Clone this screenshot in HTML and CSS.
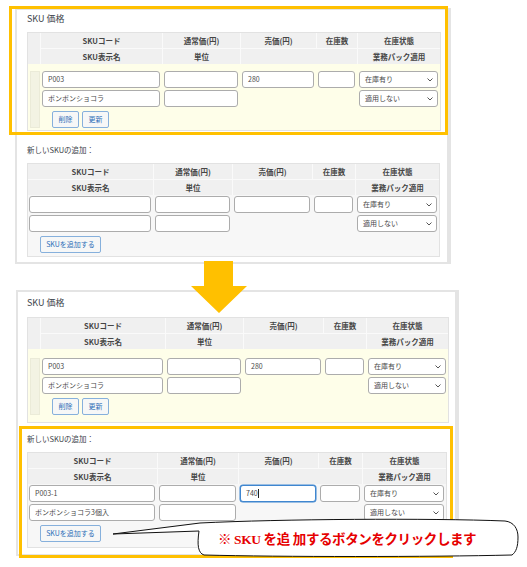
FILE: index.html
```html
<!DOCTYPE html>
<html lang="ja">
<head>
<meta charset="utf-8">
<title>SKU 価格</title>
<link rel="stylesheet" href="styles.css">
</head>
<body>
<div class="page">

  <section class="shot shot-a">
    <div class="box-title">SKU 価格</div>
    <div class="sku-table t-a1">
      <div class="thead">
        <div class="th th-handle"></div>
        <div class="th">SKUコード</div>
        <div class="th">通常価(円)</div>
        <div class="th">売価(円)</div>
        <div class="th">在庫数</div>
        <div class="th">在庫状態</div>
        <div class="th">SKU表示名</div>
        <div class="th">単位</div>
        <div class="th span2"></div>
        <div class="th">業務パック適用</div>
      </div>
      <div class="tbody body-yellow pad-a1">
        <div class="handle"></div>
        <div class="cell"><div class="field">P003</div></div>
        <div class="cell"><div class="field"></div></div>
        <div class="cell"><div class="field">280</div></div>
        <div class="cell"><div class="field"></div></div>
        <div class="cell"><div class="field select"><span>在庫有り</span><svg class="chev" viewBox="0 0 6 4"><polyline points="0.5,0.5 3,3 5.5,0.5"/></svg></div></div>
        <div class="cell"><div class="field">ポンポンショコラ</div></div>
        <div class="cell"><div class="field"></div></div>
        <div class="cell span2"></div>
        <div class="cell"><div class="field select"><span>適用しない</span><svg class="chev" viewBox="0 0 6 4"><polyline points="0.5,0.5 3,3 5.5,0.5"/></svg></div></div>
        <div class="actions">
          <span class="btn">削除</span>
          <span class="btn">更新</span>
        </div>
      </div>
    </div>

    <div class="sub-title">新しいSKUの追加：</div>
    <div class="sku-table t-a2">
      <div class="thead">
        <div class="th">SKUコード</div>
        <div class="th">通常価(円)</div>
        <div class="th">売価(円)</div>
        <div class="th">在庫数</div>
        <div class="th">在庫状態</div>
        <div class="th">SKU表示名</div>
        <div class="th">単位</div>
        <div class="th span2"></div>
        <div class="th">業務パック適用</div>
      </div>
      <div class="tbody body-gray pad-a2">
        <div class="cell"><div class="field"></div></div>
        <div class="cell"><div class="field"></div></div>
        <div class="cell"><div class="field"></div></div>
        <div class="cell"><div class="field"></div></div>
        <div class="cell"><div class="field select"><span>在庫有り</span><svg class="chev" viewBox="0 0 6 4"><polyline points="0.5,0.5 3,3 5.5,0.5"/></svg></div></div>
        <div class="cell"><div class="field"></div></div>
        <div class="cell"><div class="field"></div></div>
        <div class="cell span2"></div>
        <div class="cell"><div class="field select"><span>適用しない</span><svg class="chev" viewBox="0 0 6 4"><polyline points="0.5,0.5 3,3 5.5,0.5"/></svg></div></div>
        <div class="actions actions-full">
          <span class="btn btn-add">SKUを追加する</span>
        </div>
      </div>
    </div>
  </section>

  <section class="shot shot-b">
    <div class="box-title title-b">SKU 価格</div>
    <div class="sku-table t-b1">
      <div class="thead">
        <div class="th th-handle"></div>
        <div class="th">SKUコード</div>
        <div class="th">通常価(円)</div>
        <div class="th">売価(円)</div>
        <div class="th">在庫数</div>
        <div class="th">在庫状態</div>
        <div class="th">SKU表示名</div>
        <div class="th">単位</div>
        <div class="th span2"></div>
        <div class="th">業務パック適用</div>
      </div>
      <div class="tbody body-yellow pad-b1">
        <div class="handle"></div>
        <div class="cell"><div class="field">P003</div></div>
        <div class="cell"><div class="field"></div></div>
        <div class="cell"><div class="field">280</div></div>
        <div class="cell"><div class="field"></div></div>
        <div class="cell"><div class="field select"><span>在庫有り</span><svg class="chev" viewBox="0 0 6 4"><polyline points="0.5,0.5 3,3 5.5,0.5"/></svg></div></div>
        <div class="cell"><div class="field">ポンポンショコラ</div></div>
        <div class="cell"><div class="field"></div></div>
        <div class="cell span2"></div>
        <div class="cell"><div class="field select"><span>適用しない</span><svg class="chev" viewBox="0 0 6 4"><polyline points="0.5,0.5 3,3 5.5,0.5"/></svg></div></div>
        <div class="actions">
          <span class="btn">削除</span>
          <span class="btn">更新</span>
        </div>
      </div>
    </div>

    <div class="sub-title title-b2">新しいSKUの追加：</div>
    <div class="sku-table t-b2">
      <div class="thead">
        <div class="th">SKUコード</div>
        <div class="th">通常価(円)</div>
        <div class="th">売価(円)</div>
        <div class="th">在庫数</div>
        <div class="th">在庫状態</div>
        <div class="th">SKU表示名</div>
        <div class="th">単位</div>
        <div class="th span2"></div>
        <div class="th">業務パック適用</div>
      </div>
      <div class="tbody body-gray pad-b2">
        <div class="cell"><div class="field">P003-1</div></div>
        <div class="cell"><div class="field"></div></div>
        <div class="cell"><div class="field focus">740<span class="caret"></span></div></div>
        <div class="cell"><div class="field"></div></div>
        <div class="cell"><div class="field select"><span>在庫有り</span><svg class="chev" viewBox="0 0 6 4"><polyline points="0.5,0.5 3,3 5.5,0.5"/></svg></div></div>
        <div class="cell"><div class="field">ポンポンショコラ3個入</div></div>
        <div class="cell"><div class="field"></div></div>
        <div class="cell span2"></div>
        <div class="cell"><div class="field select"><span>適用しない</span><svg class="chev" viewBox="0 0 6 4"><polyline points="0.5,0.5 3,3 5.5,0.5"/></svg></div></div>
        <div class="actions actions-full">
          <span class="btn btn-add">SKUを追加する</span>
        </div>
      </div>
    </div>
  </section>

  <div class="highlight hl-a"></div>
  <div class="highlight hl-b"></div>

  <svg class="arrow" viewBox="0 0 60 54" width="60" height="54">
    <polygon points="15,0 44,0 44,25 58,25 30,52 2,25 15,25" fill="#ffc000"/>
  </svg>

  <div class="callout">
    <svg class="callout-shape" viewBox="0 0 425 45" width="425" height="45">
      <path d="M13,19 L100,8 C180,4 330,3 405,6 C414,7 418,14 418,22 C418,32 416,37 412,40 C330,42 180,42 104,40 C98,38 97,30 99,16 Z" fill="#fff" stroke="#111" stroke-width="1"/>
    </svg>
    <p class="callout-text">※ SKU を追 加するボタンをクリックします</p>
  </div>

</div>
</body>
</html>
```

FILE: styles.css
```css
* { box-sizing: border-box; }

html, body {
  margin: 0;
  padding: 0;
  background: #ffffff;
}

body {
  font-family: "Noto Sans CJK JP", "Noto Sans", sans-serif;
  color: #3c434a;
}

.page {
  position: relative;
  width: 527px;
  height: 567px;
  overflow: hidden;
}

/* screenshot frames */
.shot {
  background: #ffffff;
  border: 2px solid #e4e4e4;
  border-right-width: 4px;
}

.shot-a {
  margin: 8px 0 0 15px;
  width: 436px;
  padding: 2px 0 5px 10px;
}

.shot-b {
  margin: 26px 0 0 16px;
  width: 443px;
  padding: 4px 0 6px 9px;
}

.box-title {
  height: 14px;
  line-height: 14px;
  font-size: 9px;
  color: #3c434a;
  margin-bottom: 6px;
}

.title-b { margin-bottom: 7px; }

.sub-title {
  height: 14px;
  line-height: 14px;
  font-size: 7.5px;
  color: #3c434a;
  margin: 12px 0 6px;
}

.title-b2 { margin-top: 9px; }

/* tables */
.sku-table {
  border: 1px solid #e2e2e2;
}

.t-a1 { width: 414px; --cols: 12px 121px 77px 75px 40px 82px; }
.t-a2 { width: 413px; --cols: 125px 78px 79px 42px 83px; }
.t-b1 { width: 422px; --cols: 12px 124px 77px 79px 42px 81px; }
.t-b2 { width: 420px; --cols: 129px 80px 79px 43px 83px; }

.thead {
  display: grid;
  grid-template-columns: var(--cols);
  grid-template-rows: 15px 15px;
  gap: 1px;
  background: #fafafa;
}

.th {
  background: #f0f0f0;
  font-size: 7.5px;
  font-weight: 700;
  line-height: 15px;
  text-align: center;
  color: #464646;
  white-space: nowrap;
}

.th-handle { grid-row: 1 / 3; }
.span2 { grid-column: span 2; }

.tbody {
  display: grid;
  grid-template-columns: var(--cols);
  grid-template-rows: 17px 17px 19px;
  column-gap: 1px;
  row-gap: 2px;
}

.body-yellow { background: #fefee9; }
.body-gray { background: #f7f7f7; }

.pad-a1 { padding: 7px 0 2px; }
.pad-a2 { padding: 1px 0 3px; }
.pad-b1 { padding: 9px 0 7px; }
.pad-b2 { padding: 1px 0 5px; }

.handle {
  grid-column: 1;
  grid-row: 1 / 4;
  margin-left: 2px;
  background: #f3f3e3;
  border: 1px solid #ebebd8;
}

.cell {
  padding: 0 2px 0 1px;
}

.field {
  height: 17px;
  border: 1px solid #acacac;
  border-radius: 3px;
  background: #ffffff;
  font-size: 7px;
  line-height: 15px;
  padding-left: 5px;
  color: #4a4a4a;
  white-space: nowrap;
  overflow: hidden;
}

.field.select {
  display: flex;
  align-items: center;
  justify-content: space-between;
  padding-right: 4px;
}

.chev {
  width: 6px;
  height: 4px;
  fill: none;
  stroke: #555;
  stroke-width: 1;
}

.field.focus {
  border-color: #3f86cf;
  box-shadow: 0 0 0 0.5px #3f86cf;
  display: flex;
  align-items: center;
}

.caret {
  display: inline-block;
  width: 1px;
  height: 9px;
  background: #222;
  margin-left: 0.5px;
}

.actions {
  grid-column: 2 / -1;
  grid-row: 3;
  display: flex;
  align-items: flex-end;
  gap: 3px;
  padding-left: 11px;
}

.actions-full {
  grid-column: 1 / -1;
  padding-left: 12px;
}

.btn {
  display: inline-block;
  width: 27px;
  height: 17px;
  border: 1px solid #86b0dc;
  border-radius: 2px;
  background: #f6f7f7;
  color: #2e6fb7;
  font-size: 7px;
  line-height: 15px;
  text-align: center;
  white-space: nowrap;
}

.btn-add { width: 61px; }

/* overlays */
.highlight {
  position: absolute;
  border: 3px solid #ffc000;
}

.hl-a { left: 9px; top: 6px; width: 439px; height: 129px; }
.hl-b { left: 19px; top: 426px; width: 434px; height: 132px; }

.arrow {
  position: absolute;
  left: 189px;
  top: 261px;
}

.callout {
  position: absolute;
  left: 100px;
  top: 515px;
  width: 425px;
  height: 45px;
  display: flex;
  align-items: center;
}

.callout-shape {
  position: absolute;
  left: 0;
  top: 0;
}

.callout-text {
  position: relative;
  margin: 0;
  padding-left: 118px;
  font-family: "Liberation Serif", "Noto Sans CJK JP", serif;
  font-size: 13.5px;
  font-weight: 700;
  color: #e60000;
  letter-spacing: -0.4px;
  white-space: nowrap;
}
```
